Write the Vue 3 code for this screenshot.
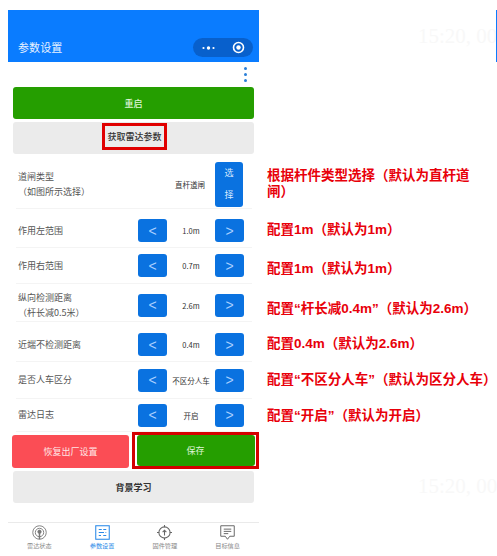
<script setup>
const rows = [
  { label: '作用左范围', value: '1.0m', height: 39, pad: 5 },
  { label: '作用右范围', value: '0.7m', height: 36, pad: 0 },
  { label: '纵向检测距离', sub: '（杆长减0.5米）', value: '2.6m', height: 38, pad: 5 },
  { label: '近端不检测距离', value: '0.4m', height: 40, pad: 6 },
  { label: '是否人车区分', value: '不区分人车', height: 37, pad: 0 },
  { label: '雷达日志', value: '开启', height: 33, pad: 0 }
]
const notes = [
  { text: '配置1m（默认为1m）', h: 39 },
  { text: '配置1m（默认为1m）', h: 40 },
  { text: '配置“杆长减0.4m”（默认为2.6m）', h: 35 },
  { text: '配置0.4m（默认为2.6m）', h: 36 },
  { text: '配置“不区分人车”（默认为区分人车）', h: 36 },
  { text: '配置“开启”（默认为开启）', h: 20 }
]
</script>

<template>
  <div class="page">
    <div class="phone">
      <header class="nav">
        <span class="nav-title">参数设置</span>
        <div class="capsule">
          <svg width="16" height="6" viewBox="0 0 16 6"><circle cx="2.5" cy="3" r="1.1" fill="#fff"/><circle cx="7.5" cy="3" r="1.7" fill="#fff"/><circle cx="12.5" cy="3" r="1.1" fill="#fff"/></svg>
          <svg width="13" height="13" viewBox="0 0 13 13"><circle cx="6.5" cy="6.5" r="5" fill="none" stroke="#fff" stroke-width="1.6"/><circle cx="6.5" cy="6.5" r="2.2" fill="#fff"/></svg>
        </div>
      </header>
      <div class="more"><i></i><i></i><i></i></div>
      <button class="wide green">重启</button>
      <div class="wide gray">
        <span class="mark">获取雷达参数</span>
      </div>

      <div class="row first">
        <div class="label"><div>道闸类型</div><div class="sub">（如图所示选择）</div></div>
        <span class="gate-value">直杆道闸</span>
        <button class="pick">选<br>择</button>
      </div>
      <div v-for="r in rows" :key="r.label" class="row" :style="{ height: r.height + 'px', paddingTop: r.pad + 'px' }">
        <div class="label"><div>{{ r.label }}</div><div v-if="r.sub" class="sub">{{ r.sub }}</div></div>
        <div class="stepper">
          <button class="step">&lt;</button>
          <span class="value">{{ r.value }}</span>
          <button class="step">&gt;</button>
        </div>
      </div>

      <div class="actions">
        <button class="half red">恢复出厂设置</button>
        <div class="save-mark"><button class="half green">保存</button></div>
      </div>
      <button class="wide gray learn">背景学习</button>

      <nav class="tabs">
        <div class="tab">
          <svg width="15" height="15" viewBox="0 0 20 20" fill="none" stroke="#777" stroke-width="1.2"><circle cx="10" cy="10" r="9"/><circle cx="10" cy="10" r="5.6"/><circle cx="10" cy="9" r="2.2" fill="#777"/><path d="M10 10v9" stroke-width="2"/></svg>
          <span>雷达状态</span>
        </div>
        <div class="tab active">
          <svg width="15" height="15" viewBox="0 0 20 20" fill="none" stroke="#2a8ae8" stroke-width="1.4"><rect x="1" y="1" width="18" height="18"/><path d="M5 6h4M11 6h4M5 10h7M14 10h1M5 14h3M11 14h4"/></svg>
          <span>参数设置</span>
        </div>
        <div class="tab">
          <svg width="15" height="15" viewBox="0 0 20 20" fill="none" stroke="#666" stroke-width="1.4"><circle cx="10" cy="10" r="7.5"/><path d="M10 0v3M10 17v3M0 10h3M17 10h3M10 14V7M7.5 9.5 10 7l2.5 2.5"/></svg>
          <span>固件管理</span>
        </div>
        <div class="tab">
          <svg width="15" height="15" viewBox="0 0 20 20" fill="none" stroke="#666" stroke-width="1.3"><path d="M1 1h18v14h-6l-3 4-3-4H1z"/><path d="M5 5.5h10M5 8.5h10M5 11.5h6"/></svg>
          <span>目标信息</span>
        </div>
      </nav>
    </div>

    <aside class="notes">
      <p class="note two">根据杆件类型选择（默认为直杆道闸）</p>
      <p v-for="(n, i) in notes" :key="i" class="note" :style="{ height: n.h + 'px' }">{{ n.text }}</p>
    </aside>

    <div class="ghost g1">15:20, 00</div>
    <div class="ghost g2">15:20, 00</div>
    <div class="edge"></div>
  </div>
</template>

<style>
html, body { margin: 0; background: #fff; }
</style>

<style scoped>
.page { position: relative; width: 497px; height: 556px; overflow: hidden; background: #fff; display: flex; font-family: "Noto Sans CJK SC", "Liberation Sans", sans-serif; }
.phone { width: 251px; margin-left: 8px; padding-top: 10px; box-sizing: border-box; height: 556px; flex: none; }
button { border: 0; padding: 0; margin: 0; font-family: inherit; }
.nav { height: 52px; background: #0a7cff; display: flex; align-items: flex-end; justify-content: space-between; padding: 0 6px 5px 10px; box-sizing: border-box; }
.nav-title { font-size: 11px; line-height: 16px; color: #e8f2ff; letter-spacing: .1px; position: relative; top: -2px; }
.capsule { width: 60px; height: 19px; border-radius: 10px; background: #0860cc; display: flex; align-items: center; justify-content: space-between; padding: 0 8px 0 8px; box-sizing: border-box; }
.more { height: 25px; display: flex; flex-direction: column; align-items: flex-end; justify-content: center; gap: 3px; padding-right: 12px; box-sizing: border-box; }
.more i { width: 3px; height: 3px; border-radius: 50%; background: #2a7fd8; }
.wide { display: flex; align-items: center; justify-content: center; width: 241px; height: 32px; margin: 0 0 3px 5px; border-radius: 3px; font-size: 9px; font-weight: 500; }
.green { background: #259e00; color: #dff5d8; }
.gray { background: #ebebeb; color: #333; }
.mark { border: 3px solid #e00000; padding: 3px 2px; line-height: 15px; font-size: 9px; color: #333; margin: 0 0 3px 2px; }
.row { display: flex; align-items: center; justify-content: space-between; margin: 0 7px 0 8px; border-bottom: 1px solid #f4f4f4; box-sizing: border-box; font-size: 9px; color: #555; }
.first { height: 52px; padding-top: 3px; }
.label { margin-left: 2px; line-height: 15.5px; }
.gate-value { margin-left: auto; margin-right: 10px; font-size: 7.5px; color: #333; }
.pick { width: 28px; height: 45px; margin-right: 9px; border-radius: 3px; background: #0a72e0; color: #d8eaff; font-size: 9px; line-height: 22px; }
.stepper { width: 106px; height: 23px; display: flex; align-items: center; justify-content: space-between; margin-right: 8px; }
.step { width: 29px; height: 23px; border-radius: 3px; background: #0a72e0; color: #a9cfff; font-size: 14px; line-height: 22px; font-family: "Liberation Sans", sans-serif; }
.value { font-size: 7.5px; color: #333; white-space: nowrap; }
.actions { display: flex; align-items: flex-start; margin: 0 0 2px 4px; height: 37px; }
.half { height: 33px; width: 118px; border-radius: 3px; font-size: 9px; }
.red { background: #fb4d55; color: #ffe6e6; margin-top: 3px; }
.save-mark { margin-left: 3px; width: 128px; height: 37px; border: 3px solid #d40000; box-sizing: border-box; display: flex; align-items: center; justify-content: center; background: #fff; }
.save-mark .half { width: 118px; height: 31px; }
.learn { height: 32px; margin-top: 0; margin-bottom: 19px; font-weight: 700; }
.tabs { border-top: 1px solid #eaeaea; height: 33px; box-sizing: border-box; display: grid; grid-template-columns: repeat(4, 1fr); margin: 0; }
.tab { display: flex; flex-direction: column; align-items: center; padding-top: 2px; font-size: 6.2px; color: #888; line-height: 9px; gap: 1px; }
.tab.active { color: #2a8ae8; }
.notes { margin-left: 8px; padding-top: 168px; width: 228px; flex: none; font-family: "Liberation Sans", "Noto Sans CJK SC", sans-serif; }
.note { margin: 0; font-size: 13.5px; line-height: 17px; color: #e8000a; font-weight: 700; white-space: nowrap; text-spacing-trim: space-all; }
.note.two { white-space: normal; width: 212px; height: 53px; line-height: 16px; }
.ghost { position: absolute; left: 418px; font-family: "Liberation Serif", serif; font-size: 21px; color: #f8f8f8; white-space: nowrap; }
.g1 { top: 24px; }
.g2 { top: 474px; }
.edge { position: absolute; left: 496px; top: 10px; width: 1px; height: 52px; background: #0a7cff; }
</style>
